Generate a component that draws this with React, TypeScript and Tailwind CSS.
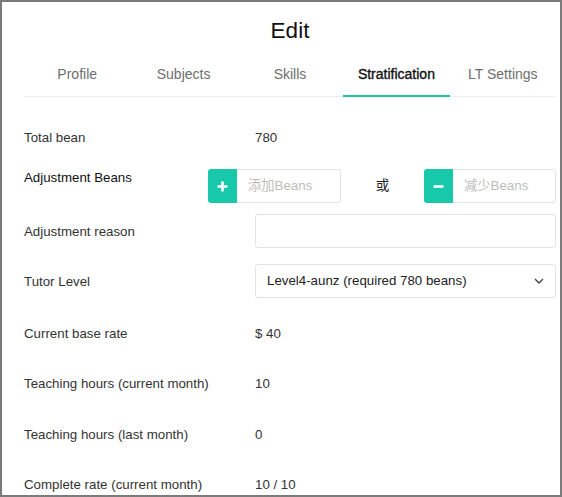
import React from "react";

const TEAL = "bg-[#17c8ab]";

function Row({
  label,
  children,
  className = "",
  text = true,
}: {
  label: string;
  children?: React.ReactNode;
  className?: string;
  text?: boolean;
}) {
  return (
    <div className={`flex items-center ${className}`}>
      <div className="w-[231px] shrink-0 pt-[2px] text-[13.3px] leading-[18px] text-[#333]">{label}</div>
      <div className={`flex-1 text-[13.3px] leading-[18px] text-[#333] ${text ? "pt-[2px]" : ""}`}>{children}</div>
    </div>
  );
}

export default function App() {
  const tabs = ["Profile", "Subjects", "Skills", "Stratification", "LT Settings"];
  return (
    <div
      className="w-[562px] h-[497px] border-2 border-[#7b7b7b] bg-white overflow-hidden box-border"
      style={{ fontFamily: '"Liberation Sans", Arial, "Noto Sans CJK SC", sans-serif' }}
    >
      <div className="pl-[22px] pr-[4px]">
        <div className="h-[58px] flex items-center justify-center text-[22.5px] text-[#111]">Edit</div>
        <div className="flex h-[37px] border-b border-[#eeeeee]">
          {tabs.map((t, i) => (
            <div
              key={t}
              className={`relative flex-1 flex justify-center pt-[5px] text-[14px] leading-[18px] ${
                i === 3 ? "text-[#111] [-webkit-text-stroke:0.35px_#111]" : "text-[#6e6e6e]"
              }`}
            >
              {t}
              {i === 3 && <div className={`absolute left-0 right-0 bottom-[-1px] h-[2px] ${TEAL}`} />}
            </div>
          ))}
        </div>

        <Row label="Total bean" className="h-[40px] mt-[20px]">780</Row>

        <div className="flex items-start mt-[12px] h-[34px]">
          <div className="w-[184px] shrink-0 text-[13.3px] leading-[18px] text-[#111]">Adjustment Beans</div>
          <div className="flex-1 flex items-center justify-between">
            <div className="flex w-[133px] h-[34px]">
              <div className={`w-[29px] h-full rounded-l-[3px] ${TEAL} flex items-center justify-center`}>
                <svg width="11" height="11" viewBox="0 0 11 11">
                  <path d="M5.5 0.5v10M0.5 5.5h10" stroke="white" strokeWidth="2.6" />
                </svg>
              </div>
              <div className="flex-1 h-full border border-l-0 border-[#e4e4e4] rounded-r-[3px] flex items-center pl-[11px] text-[13.3px] text-[#bdbdbd]">
                添加Beans
              </div>
            </div>
            <div className="text-[13.5px] text-[#222] w-[83px] text-center">或</div>
            <div className="flex w-[132px] h-[34px]">
              <div className={`w-[29px] h-full rounded-l-[3px] ${TEAL} flex items-center justify-center`}>
                <svg width="11" height="11" viewBox="0 0 11 11">
                  <path d="M0.5 5.5h10" stroke="white" strokeWidth="2.6" />
                </svg>
              </div>
              <div className="flex-1 h-full border border-l-0 border-[#e4e4e4] rounded-r-[3px] flex items-center pl-[11px] text-[13.3px] text-[#bdbdbd]">
                减少Beans
              </div>
            </div>
          </div>
        </div>

        <Row label="Adjustment reason" className="mt-[11px] h-[34px]" text={false}>
          <div className="h-[34px] border border-[#e4e4e4] rounded-[3px]" />
        </Row>

        <Row label="Tutor Level" className="mt-[16px] h-[34px]" text={false}>
          <div className="h-[34px] border border-[#e4e4e4] rounded-[3px] flex items-center justify-between pl-[11px] pr-[11px] text-[13.3px] text-[#222]">
            <span>Level4-aunz (required 780 beans)</span>
            <svg width="10" height="6" viewBox="0 0 10 6">
              <path d="M1 1l4 4 4-4" fill="none" stroke="#444" strokeWidth="1.4" />
            </svg>
          </div>
        </Row>

        <div className="mt-[10px]">
          <Row label="Current base rate" className="h-[50.3px]">$ 40</Row>
          <Row label="Teaching hours (current month)" className="h-[50.3px]">10</Row>
          <Row label="Teaching hours (last month)" className="h-[50.3px]">0</Row>
          <Row label="Complete rate (current month)" className="h-[50.3px]">10 / 10</Row>
        </div>
      </div>
    </div>
  );
}
